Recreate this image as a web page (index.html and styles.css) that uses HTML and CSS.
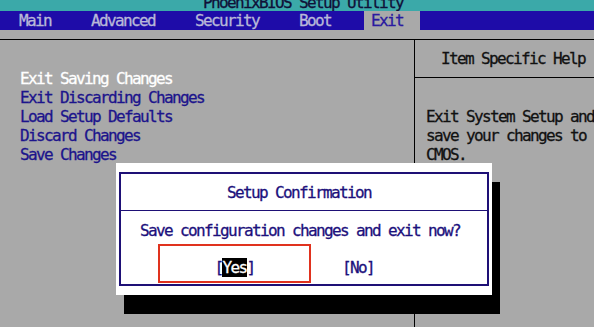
FILE: index.html
```html
<!DOCTYPE html>
<html lang="en">
<head>
  <meta charset="UTF-8">
  <title>PhoenixBIOS Setup Utility</title>
  <link rel="stylesheet" href="styles.css">
</head>
<body>
<div class="screen">
  <div class="titlebar"><span class="title">PhoenixBIOS Setup Utility</span></div>

  <nav class="menubar">
    <span class="tab">Main</span>
    <span class="tab">Advanced</span>
    <span class="tab">Security</span>
    <span class="tab">Boot</span>
    <span class="tab active">Exit</span>
  </nav>

  <div class="content">
    <div class="items">
      <div class="item selected">Exit Saving Changes</div>
      <div class="item">Exit Discarding Changes</div>
      <div class="item">Load Setup Defaults</div>
      <div class="item">Discard Changes</div>
      <div class="item">Save Changes</div>
    </div>
    <aside class="help">
      <div class="help-head">Item Specific Help</div>
      <div class="help-text">
        <div>Exit System Setup and</div>
        <div>save your changes to</div>
        <div>CMOS.</div>
      </div>
    </aside>
  </div>

  <div class="dialog">
    <div class="frame">
      <div class="dialog-title">Setup Confirmation</div>
      <div class="message">Save configuration changes and exit now?</div>
      <div class="choices">
        <div class="choice-box"><span class="choice">[<span class="hl">Yes</span>]</span></div>
        <span class="choice no">[No]</span>
      </div>
    </div>
  </div>
</div>
</body>
</html>
```

FILE: styles.css
```css
body {
  margin: 0;
  background: #a9a9a9;
}

.screen {
  position: relative;
  width: 594px;
  height: 327px;
  overflow: hidden;
  background: #a9a9a9;
  font-family: "DejaVu Sans Mono", monospace;
  font-size: 16px;
  letter-spacing: -1.63px;
  line-height: 19px;
  white-space: nowrap;
  -webkit-text-stroke: 0.3px currentColor;
}

.titlebar {
  height: 11px;
  overflow: hidden;
  background: #3ba9a9;
  padding-left: 203px;
}

.title {
  display: block;
  margin-top: -7px;
  color: #101038;
}

.menubar {
  display: flex;
  height: 19px;
  line-height: 20px;
  background: #1e0ca8;
  padding-left: 19px;
  color: #b8b8d8;
}

.tab {
  margin-right: 40px;
}

.tab.active {
  margin-left: -7px;
  padding: 0 17px 0 7px;
  background: #a9a9a9;
  color: #2a1aa0;
}

.content {
  display: flex;
  margin-top: 9px;
  border-top: 1px solid #000;
  height: 287px;
}

.items {
  width: 416px;
  border-right: 1px solid #000;
  padding: 29px 0 0 20px;
  box-sizing: border-box;
  color: #1c148c;
}

.item.selected {
  color: #fff;
}

.help {
  flex: 1;
  color: #111;
}

.help-head {
  height: 37px;
  line-height: 38px;
  padding-left: 26px;
  border-bottom: 1px solid #000;
}

.help-text {
  padding: 29px 0 0 11px;
}

.dialog {
  position: absolute;
  left: 116px;
  top: 163px;
  width: 376px;
  height: 132px;
  box-sizing: border-box;
  padding: 9px 3px;
  background: #fff;
  box-shadow: 8px 19px 0 #000;
  color: #1c107c;
}

.frame {
  height: 100%;
  box-sizing: border-box;
  border: 2px solid #1e1076;
}

.dialog-title {
  height: 36px;
  line-height: 37px;
  padding-left: 106px;
  border-bottom: 1px solid #1e1076;
}

.message {
  margin-top: 10px;
  padding-left: 19px;
}

.choices {
  display: flex;
  align-items: flex-start;
  margin-top: 4px;
}

.choice-box {
  display: flex;
  justify-content: center;
  margin-left: 37px;
  width: 153px;
  height: 39px;
  box-sizing: border-box;
  padding-top: 12px;
  border: 2px solid #e0321e;
}

.choice.no {
  margin: 14px 0 0 31px;
}

.hl {
  background: #000;
  color: #fff;
}
```
